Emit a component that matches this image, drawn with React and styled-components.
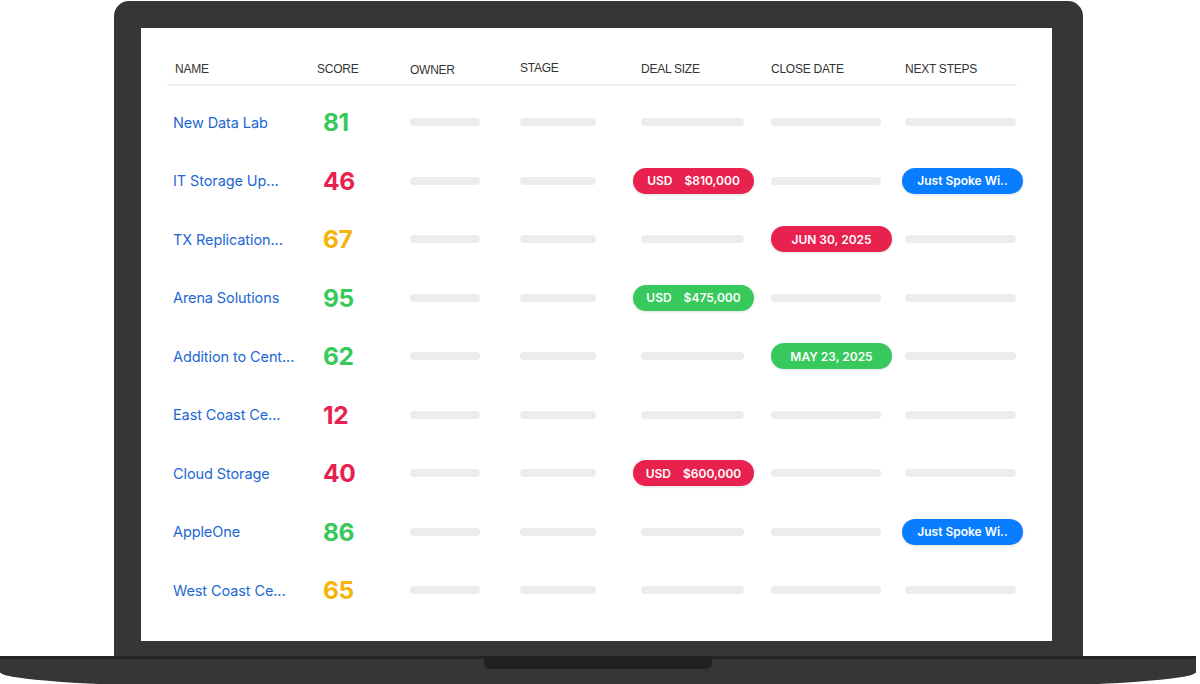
import styled, { createGlobalStyle } from 'styled-components';

const GlobalStyle = createGlobalStyle`
  html, body {
    margin: 0;
    padding: 0;
    background: #fff;
    overflow: hidden;
  }
  body {
    font-family: Inter, "Liberation Sans", sans-serif;
  }
`;

const COLS = '150px 93px 110px 121px 130px 134px 112px';

const tones = {
  green: '#37c95b',
  red: '#e8214f',
  orange: '#f6b40b',
  blue: '#087dff',
};

const rows = [
  { name: 'New Data Lab', score: 81, tone: 'green' },
  { name: 'IT Storage Up...', score: 46, tone: 'red', deal: { tone: 'red', amount: '$810,000' }, next: true },
  { name: 'TX Replication...', score: 67, tone: 'orange', close: { tone: 'red', date: 'JUN 30, 2025' } },
  { name: 'Arena Solutions', score: 95, tone: 'green', deal: { tone: 'green', amount: '$475,000' } },
  { name: 'Addition to Cent...', score: 62, tone: 'green', close: { tone: 'green', date: 'MAY 23, 2025' } },
  { name: 'East Coast Ce...', score: 12, tone: 'red' },
  { name: 'Cloud Storage', score: 40, tone: 'red', deal: { tone: 'red', amount: '$600,000' } },
  { name: 'AppleOne', score: 86, tone: 'green', next: true },
  { name: 'West Coast Ce...', score: 65, tone: 'orange' },
];

const headers = [
  { label: 'Name', pad: 8 },
  { label: 'Score', pad: 0 },
  { label: 'Owner', pad: 0, nudge: 1 },
  { label: 'Stage', pad: 0, nudge: -1 },
  { label: 'Deal Size', pad: 0 },
  { label: 'Close Date', pad: 0 },
  { label: 'Next Steps', pad: 0 },
];

const App = () => {
  return (
    <>
      <GlobalStyle />
      <Stage>
        <Lid>
          <Screen>
            <Table>
              <HeaderRow>
                {headers.map(h => (
                  <Th key={h.label} $pad={h.pad} $nudge={h.nudge || 0}>{h.label}</Th>
                ))}
              </HeaderRow>
              <Body>
                {rows.map(r => (
                  <Row key={r.name}>
                    <Cell $pad={6}><Name>{r.name}</Name></Cell>
                    <Cell $pad={6}><Score $tone={r.tone}>{r.score}</Score></Cell>
                    <Cell><Bar $w={70} /></Cell>
                    <Cell><Bar $w={76} /></Cell>
                    <Cell>
                      {r.deal ? (
                        <Pill $tone={r.deal.tone} $shift={-8}>
                          <span>USD</span>
                          <span>{r.deal.amount}</span>
                        </Pill>
                      ) : (
                        <Bar $w={103} />
                      )}
                    </Cell>
                    <Cell>
                      {r.close ? (
                        <Pill $tone={r.close.tone}>{r.close.date}</Pill>
                      ) : (
                        <Bar $w={110} />
                      )}
                    </Cell>
                    <Cell>
                      {r.next ? (
                        <Pill $tone="blue" $shift={-3}>Just Spoke Wi..</Pill>
                      ) : (
                        <Bar $w={111} />
                      )}
                    </Cell>
                  </Row>
                ))}
              </Body>
            </Table>
          </Screen>
        </Lid>
        <Base>
          <Notch />
        </Base>
      </Stage>
    </>
  );
};

const Stage = styled.div`
  width: 1200px;
  height: 684px;
  display: flex;
  flex-direction: column;
  overflow: hidden;
`;

/* laptop lid + screen */
const Lid = styled.div`
  box-sizing: border-box;
  width: 969px;
  height: 655px;
  margin: 1px 0 0 114px;
  padding: 27px 31px 15px 27px;
  background: #363636;
  border-radius: 15px 15px 0 0;
  display: flex;
  flex-shrink: 0;
`;

const Screen = styled.div`
  flex: 1;
  background: #fff;
  padding: 26px 0 0 26px;
  box-sizing: border-box;
`;

const Table = styled.div`
  width: 850px;
  display: flex;
  flex-direction: column;
`;

const HeaderRow = styled.div`
  display: grid;
  grid-template-columns: ${COLS};
  height: 30px;
  align-items: center;
  border-bottom: 2px solid #eeeeee;
`;

const Th = styled.div`
  padding-left: ${p => p.$pad}px;
  transform: translateY(${p => p.$nudge}px);
  font-family: "Liberation Sans", Arial, sans-serif;
  font-size: 12px;
  letter-spacing: -0.25px;
  text-transform: uppercase;
  color: #333;
  white-space: nowrap;
`;

const Body = styled.div`
  padding-top: 7px;
  display: flex;
  flex-direction: column;
`;

const Row = styled.div`
  display: grid;
  grid-template-columns: ${COLS};
  height: 58.5px;
  align-items: center;
`;

const Cell = styled.div`
  display: flex;
  align-items: center;
  padding-left: ${p => p.$pad || 0}px;
  min-width: 0;
  overflow: visible;
`;

const Name = styled.span`
  font-family: Inter, "Liberation Sans", sans-serif;
  font-size: 14.5px;
  letter-spacing: -0.1px;
  color: #1d68d3;
  white-space: nowrap;
`;

const Score = styled.span`
  font-family: Inter, "Liberation Sans", sans-serif;
  font-weight: 700;
  font-size: 24.5px;
  letter-spacing: -0.4px;
  color: ${p => tones[p.$tone]};
`;

const Bar = styled.div`
  flex-shrink: 0;
  width: ${p => p.$w}px;
  height: 8px;
  border-radius: 4px;
  background: #ececec;
`;

const Pill = styled.div`
  box-sizing: border-box;
  flex-shrink: 0;
  width: 121px;
  height: 26px;
  margin-left: ${p => p.$shift || 0}px;
  border-radius: 13px;
  background: ${p => tones[p.$tone]};
  box-shadow: 0 1px 3px rgba(0, 0, 0, 0.12);
  color: #fff;
  display: flex;
  align-items: center;
  justify-content: center;
  gap: 12px;
  font-family: Inter, "Liberation Sans", sans-serif;
  font-weight: 600;
  font-size: 12px;
  white-space: nowrap;
`;

/* laptop base */
const Base = styled.div`
  box-sizing: border-box;
  width: 1196px;
  height: 30px;
  flex-shrink: 0;
  background: #363636;
  border-top: 3px solid #232323;
  border-radius: 0 0 210px 210px / 0 0 14px 14px;
  display: flex;
  justify-content: center;
`;

const Notch = styled.div`
  width: 228px;
  height: 10px;
  background: #212121;
  border-radius: 0 0 6px 6px;
`;

export default App;
